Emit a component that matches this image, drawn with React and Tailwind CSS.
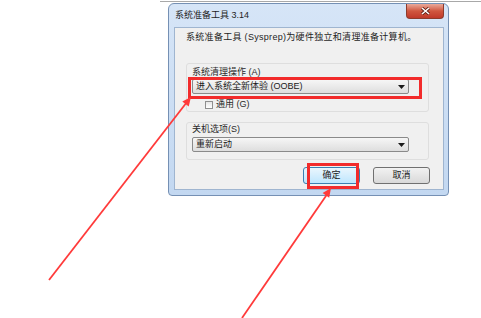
const FONT = { fontFamily: '"Liberation Sans", "Noto Sans CJK SC", sans-serif' }

function Combo({ label }) {
  return (
    <div className="flex h-[15px] w-[217px] items-center justify-between rounded-[2px] border border-[#8a8a8a] bg-gradient-to-b from-[#f6f6f6] to-[#dedede] pl-[3px] pr-[3px]">
      <span className="text-[9px] leading-[11px] text-[#1a1a1a]">{label}</span>
      <svg width="7" height="4" viewBox="0 0 7 4">
        <path d="M0 0 H7 L3.5 4 Z" fill="#1a1a1a" />
      </svg>
    </div>
  )
}

function Button({ children, primary }) {
  return (
    <div
      className={`flex h-[17px] w-[57px] items-center justify-center rounded-[3px] border text-[9px] leading-[11px] text-[#1a1a1a] ${
        primary
          ? 'border-[#3c7fb1] bg-gradient-to-b from-[#eaf6fd] to-[#bee6fd]'
          : 'border-[#707070] bg-gradient-to-b from-[#f2f2f2] to-[#d9d9d9]'
      }`}
    >
      {children}
    </div>
  )
}

export default function App() {
  return (
    <div className="relative h-[318px] w-[481px] overflow-hidden bg-white" style={FONT}>
      <div className="ml-[160px] mt-px h-px bg-[#a8a8a8]" />

      {/* dialog frame */}
      <div className="ml-[168px] mt-px flex h-[193px] w-[281px] flex-col rounded-t-[6px] rounded-b-[4px] border border-[#7590b4] bg-gradient-to-b from-[#d6e5f7] to-[#c3d8f1]">
        <div className="flex h-[23px] items-start">
          <span className="mt-[6px] pl-[6px] text-[9px] leading-[11px] text-[#1e1e1e]">系统准备工具 3.14</span>
          <div className="ml-auto mr-[4px] flex h-[15px] w-[38px] items-center justify-center rounded-b-[4px] border border-t-0 border-[#8d3b2c] bg-gradient-to-b from-[#e9a99a] via-[#d0563f] to-[#c0392a]">
            <svg width="9" height="8" viewBox="0 0 9 8">
              <path d="M1 1 L8 7 M8 1 L1 7" stroke="#5a1a10" strokeWidth="3" />
              <path d="M1 1 L8 7 M8 1 L1 7" stroke="#ffffff" strokeWidth="1.6" />
            </svg>
          </div>
        </div>

        {/* client area */}
        <div className="ml-[5px] h-[163px] w-[270px] border border-[#9fb5d0] bg-[#f0f0f0]">
          <p className="mt-[4px] pl-[11px] text-[9px] leading-[11px] tracking-[0.3px] text-[#1e1e1e]">
            系统准备工具 (Sysprep)为硬件独立和清理准备计算机。
          </p>

          <div className="ml-[11px] mt-[20px] h-[49px] w-[243px] rounded-[3px] border border-[#dedede] pl-[5px] pt-[3px]">
            <div className="text-[9px] leading-[11px] text-[#2a2a2a]">系统清理操作 (A)</div>
            <div className="mt-px">
              <Combo label="进入系统全新体验 (OOBE)" />
            </div>
            <div className="ml-[13px] mt-[5px] flex items-center gap-[3px]">
              <div className="h-[8px] w-[8px] border border-[#8f8f8f] bg-gradient-to-b from-[#e6e6e6] to-[#ffffff]" />
              <span className="text-[9px] leading-[11px] text-[#2a2a2a]">通用 (G)</span>
            </div>
          </div>

          <div className="ml-[11px] mt-[10px] h-[38px] w-[243px] rounded-[3px] border border-[#dedede] pl-[5px] pt-[1px]">
            <div className="text-[9px] leading-[11px] text-[#2a2a2a]">关机选项(S)</div>
            <div className="mt-[2px]">
              <Combo label="重新启动" />
            </div>
          </div>

          <div className="mt-[7px] flex justify-end gap-[13px] pr-[13px]">
            <Button primary>确定</Button>
            <Button>取消</Button>
          </div>
        </div>
      </div>

      {/* annotations */}
      <div className="absolute left-[188px] top-[77px] h-[22px] w-[234px] border-[3px] border-[#f22b2b]" />
      <div className="absolute left-[307px] top-[163px] h-[26px] w-[52px] border-[3px] border-[#f22b2b]" />
      <svg className="absolute left-0 top-0" width="481" height="318" viewBox="0 0 481 318">
        <line x1="49" y1="280" x2="187" y2="102" stroke="#ff3a3a" strokeWidth="1.8" />
        <polygon points="191,97 188.7,106.6 182.3,101.6" fill="#ff3a3a" />
        <line x1="242" y1="318" x2="328" y2="193" stroke="#ff3a3a" strokeWidth="1.8" />
        <polygon points="331,188 329.2,197.7 322.6,193.1" fill="#ff3a3a" />
      </svg>
    </div>
  )
}
